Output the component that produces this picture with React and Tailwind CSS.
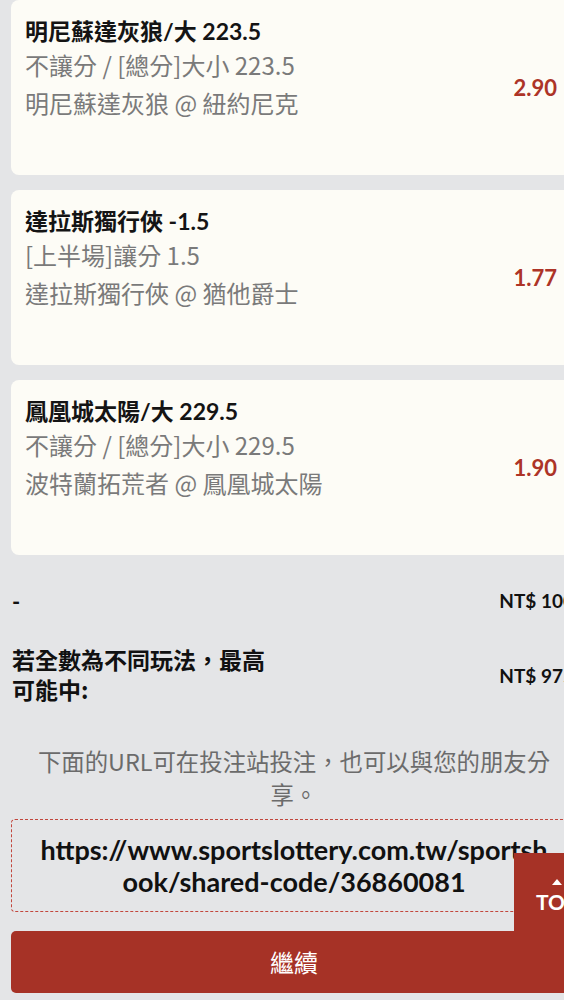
import React from "react";

const bets = [
  { title: "明尼蘇達灰狼/大 223.5", sub: "不讓分 / [總分]大小 223.5", match: "明尼蘇達灰狼 @ 紐約尼克", odds: "2.90" },
  { title: "達拉斯獨行俠 -1.5", sub: "[上半場]讓分 1.5", match: "達拉斯獨行俠 @ 猶他爵士", odds: "1.77" },
  { title: "鳳凰城太陽/大 229.5", sub: "不讓分 / [總分]大小 229.5", match: "波特蘭拓荒者 @ 鳳凰城太陽", odds: "1.90" },
];

export default function App() {
  return (
    <div className="relative w-[564px] h-[1000px] overflow-hidden bg-[#e4e5e7] font-['Lato','Noto_Sans_CJK_TC',sans-serif]">
      <div className="w-[588px] px-[11px] flex flex-col">
        <div className="flex flex-col gap-[15px]">
          {bets.map((b, i) => (
            <div key={i} className="h-[175px] rounded-lg bg-[#fdfcf6] flex items-center pl-[14px] pr-[20px]">
              <div className="flex-1 self-start pt-[15px]">
                <div className="text-[23px] leading-[32px] font-bold text-[#141414]">{b.title}</div>
                <div className="text-[24px] leading-[36px] text-[#7a7a7a] font-['Noto_Sans_CJK_TC',sans-serif]">{b.sub}</div>
                <div className="mt-[2px] text-[24px] leading-[36px] text-[#7a7a7a] font-['Noto_Sans_CJK_TC',sans-serif]">{b.match}</div>
              </div>
              <div className="text-[22px] font-bold text-[#ad3427]">{b.odds}</div>
            </div>
          ))}
        </div>

        <div className="mt-[30px] h-[32px] flex items-center justify-between pl-[1px] pr-[3px]">
          <div className="text-[22px] font-bold text-[#111]">-</div>
          <div className="text-[19px] font-bold text-[#111]">NT$ 100</div>
        </div>

        <div className="mt-[27px] flex items-center justify-between pl-[1px] pr-[3px]">
          <div className="w-[270px] text-[23px] leading-[30px] font-bold text-[#111] font-['Noto_Sans_CJK_TC',sans-serif]">若全數為不同玩法，最高可能中:</div>
          <div className="mt-[4px] text-[19px] font-bold text-[#111]">NT$ 975</div>
        </div>

        <div className="mt-[41px] px-[20px] text-center text-[23.4px] leading-[33px] text-[#6b6b6b] font-['Noto_Sans_CJK_TC',sans-serif]">
          下面的URL可在投注站投注，也可以與您的朋友分享。
        </div>

        <div className="mt-[8px] h-[93px] rounded-[4px] border border-dashed border-[#c2463d] flex flex-col items-center justify-center">
          <div className="whitespace-nowrap text-[27px] leading-[32px] font-bold text-[#111]">https://www.sportslottery.com.tw/sportsh</div>
          <div className="whitespace-nowrap text-[27px] leading-[32px] font-bold text-[#111]">ook/shared-code/36860081</div>
        </div>

        <button className="mt-[19px] h-[62px] rounded-[5px] bg-[#a63226] text-white text-[24px] flex items-center justify-center font-['Noto_Sans_CJK_TC',sans-serif]">
          繼續
        </button>
      </div>

      <div className="absolute left-[514px] top-[853px] w-[80px] h-[90px] bg-[#a63226] flex flex-col items-center pt-[26px] pl-[6px]">
        <svg width="10" height="6" viewBox="0 0 10 6">
          <polygon points="5,0 10,6 0,6" fill="#ffffff" />
        </svg>
        <div className="mt-[5px] text-[21px] leading-[24px] font-bold text-white">TOP</div>
      </div>
    </div>
  );
}
